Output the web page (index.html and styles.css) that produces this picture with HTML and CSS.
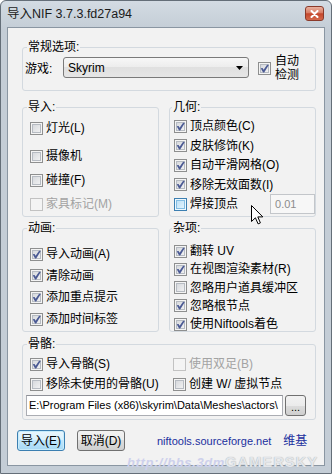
FILE: index.html
```html
<!DOCTYPE html>
<html lang="zh-CN">
<head>
<meta charset="utf-8">
<title>导入NIF</title>
<link rel="stylesheet" href="styles.css">
</head>
<body>
<svg class="defs" width="0" height="0" aria-hidden="true">
  <symbol id="chk" viewBox="0 0 11 11">
    <path d="M1.7 5.3 L3.6 4.9 L4.6 6.8 L8.1 1.7 L9.8 2.1 L5.2 9.4 L4.1 9.4 Z" fill="#4b5a94"/>
  </symbol>
</svg>
<div class="window">
  <header class="titlebar">
    <span class="title">导入NIF 3.7.3.fd27a94</span>
    <span class="close"><svg width="9" height="8" viewBox="0 0 9 8"><path d="M1.5 1 L7.5 7 M7.5 1 L1.5 7" stroke="#fff" stroke-width="2" stroke-linecap="round"/></svg></span>
  </header>
  <main class="client">
    <fieldset class="group general">
      <legend>常规选项:</legend>
      <div class="game-row">
        <span class="game-lbl">游戏:</span>
        <div class="combo"><span>Skyrim</span><svg width="7" height="4" viewBox="0 0 7 4"><path d="M0 0H7L3.5 4Z" fill="#000"/></svg></div>
        <label class="auto"><span class="cb on"><svg><use href="#chk"/></svg></span><span class="auto-text">自动<br>检测</span></label>
      </div>
    </fieldset>

    <div class="cols row1">
      <fieldset class="group">
        <legend>导入:</legend>
        <div class="list l-import">
          <label class="item first"><span class="cb"></span>灯光(L)</label>
          <label class="item"><span class="cb"></span>摄像机</label>
          <label class="item"><span class="cb"></span>碰撞(F)</label>
          <label class="item disabled"><span class="cb"></span>家具标记(M)</label>
        </div>
      </fieldset>
      <fieldset class="group right">
        <legend>几何:</legend>
        <div class="list l-geo">
          <label class="item"><span class="cb on"><svg><use href="#chk"/></svg></span>顶点颜色(C)</label>
          <label class="item"><span class="cb on"><svg><use href="#chk"/></svg></span>皮肤修饰(K)</label>
          <label class="item"><span class="cb on"><svg><use href="#chk"/></svg></span>自动平滑网格(O)</label>
          <label class="item"><span class="cb on"><svg><use href="#chk"/></svg></span>移除无效面数(I)</label>
          <label class="item"><span class="cb hover"></span>焊接顶点<span class="num">0.01</span></label>
        </div>
      </fieldset>
    </div>

    <div class="cols row2">
      <fieldset class="group">
        <legend>动画:</legend>
        <div class="list l-anim">
          <label class="item"><span class="cb on"><svg><use href="#chk"/></svg></span>导入动画(A)</label>
          <label class="item"><span class="cb on"><svg><use href="#chk"/></svg></span>清除动画</label>
          <label class="item"><span class="cb on"><svg><use href="#chk"/></svg></span>添加重点提示</label>
          <label class="item"><span class="cb on"><svg><use href="#chk"/></svg></span>添加时间标签</label>
        </div>
      </fieldset>
      <fieldset class="group right">
        <legend>杂项:</legend>
        <div class="list l-misc">
          <label class="item"><span class="cb on"><svg><use href="#chk"/></svg></span>翻转 UV</label>
          <label class="item"><span class="cb on"><svg><use href="#chk"/></svg></span>在视图渲染素材(R)</label>
          <label class="item"><span class="cb"></span>忽略用户道具缓冲区</label>
          <label class="item"><span class="cb on"><svg><use href="#chk"/></svg></span>忽略根节点</label>
          <label class="item"><span class="cb on"><svg><use href="#chk"/></svg></span>使用Niftools着色</label>
        </div>
      </fieldset>
    </div>

    <fieldset class="group bones">
      <legend>骨骼:</legend>
      <div class="bones-body">
        <div class="bone-grid">
          <label class="item"><span class="cb on"><svg><use href="#chk"/></svg></span>导入骨骼(S)</label>
          <label class="item disabled"><span class="cb"></span>使用双足(B)</label>
          <label class="item"><span class="cb"></span>移除未使用的骨骼(U)</label>
          <label class="item"><span class="cb"></span>创建 W/ 虚拟节点</label>
        </div>
        <div class="path-row">
          <div class="path">E:\Program Files (x86)\skyrim\Data\Meshes\actors\</div>
          <span class="browse">...</span>
        </div>
      </div>
    </fieldset>

    <div class="bottom">
      <span class="btn default">导入(E)</span>
      <span class="btn cancel">取消(D)</span>
      <a class="link site">niftools.sourceforge.net</a>
      <a class="link wiki">维基</a>
    </div>
  </main>

  <div class="watermark"><span class="wm-a">http://bbs.3dm</span><span class="wm-b">GAMERSKY</span></div>
  <svg class="cursor" width="13" height="20" viewBox="0 0 13 20"><path d="M0.5 0.5 L0.5 16.5 L4.4 12.8 L7.1 18.9 L9.4 17.9 L6.8 11.9 L11.8 11.9 Z" fill="#fff" stroke="#000" stroke-width="1" stroke-linejoin="miter"/></svg>
</div>
</body>
</html>
```
FILE: styles.css
```css
* { box-sizing: border-box; }
html, body { margin: 0; padding: 0; }
body {
  width: 332px;
  height: 474px;
  overflow: hidden;
  background: #fff;
  font-family: "Liberation Sans", "Noto Sans CJK SC", sans-serif;
  font-size: 12px;
  line-height: 14px;
  color: #000;
}
.defs { position: absolute; width: 0; height: 0; }

.window {
  position: relative;
  width: 332px;
  height: 474px;
  border: 1px solid #646e78;
  border-radius: 6px 6px 0 0;
  background: linear-gradient(#d3dbe3, #c4cdd6 28px, #c4cdd6);
  display: flex;
  flex-direction: column;
}
.titlebar {
  height: 26px;
  flex: none;
  display: flex;
  align-items: center;
  justify-content: space-between;
  padding: 0 7px 0 6px;
}
.title { color: #1b1b1b; font-size: 12.5px; }
.close {
  width: 19px;
  height: 15px;
  margin-top: -1px;
  border: 1px solid #8b3a2a;
  border-radius: 3px;
  background: linear-gradient(#e9b19f, #d87c64 45%, #c4462c 52%, #d3694b);
  display: flex;
  align-items: center;
  justify-content: center;
}

.client {
  flex: 1;
  margin: 0 6px 7px;
  border: 1px solid #8a96a2;
  background: #f2f2f2;
  display: flex;
  flex-direction: column;
  padding: 12px 8px 0 14px;
}

.group {
  margin: 0;
  padding: 0;
  min-width: 0;
  border: 1px solid #d3d9df;
  border-radius: 3px;
}
.group legend {
  padding: 0 1px;
  margin-left: 4px;
  line-height: 14px;
}
.group.right legend { margin-left: 2px; }

.general { height: 51px; flex: none; }
.game-row {
  display: flex;
  align-items: center;
  padding: 1px 0 0 2px;
}
.game-lbl { width: 28px; }
.combo {
  margin-left: 10px;
  width: 186px;
  height: 21px;
  align-self: flex-start;
  margin-top: 2px;
  border: 1px solid #7a7a7a;
  border-radius: 3px;
  background: linear-gradient(#f7f7f7, #ececec 50%, #e0e0e0 50%, #e6e6e6);
  display: flex;
  align-items: center;
  justify-content: space-between;
  padding: 0 5px 0 4px;
}
.auto { margin-left: 9px; display: flex; align-items: center; gap: 4px; }
.auto-text { line-height: 13.5px; }

.cols {
  display: grid;
  grid-template-columns: 137px 147px;
  column-gap: 10px;
  flex: none;
}
.row1 { margin-top: 9px; height: 117px; }
.row2 { margin-top: 4px; height: 110px; }

.list { display: flex; flex-direction: column; }
.l-import { padding: 7px 0 0 7px; gap: 10px; }
.l-import .first { margin-bottom: 4px; }
.l-geo { padding: 5px 0 0 4px; gap: 5.5px; }
.l-anim { padding: 12px 0 0 7px; gap: 7.7px; }
.l-misc { padding: 9px 0 0 4px; gap: 4.25px; }

.item {
  display: flex;
  align-items: center;
  gap: 3px;
  height: 14px;
  white-space: nowrap;
}
.item.disabled { color: #a3a3a3; }

.cb {
  flex: none;
  width: 13px;
  height: 13px;
  border: 1px solid #8e8f8f;
  background: linear-gradient(135deg, #d0d3d8, #f7f7f7);
  box-shadow: inset 0 0 0 1px #f4f4f4, inset 0 0 0 2px #b6bbc2;
}
.cb svg { display: block; width: 11px; height: 11px; }
.cb.hover {
  border-color: #3c7fb1;
  background: linear-gradient(135deg, #b4dcf5, #eaf7fe);
  box-shadow: inset 0 0 0 1px #eef8fe, inset 0 0 0 2px #83bde3;
}
.disabled .cb {
  border-color: #c2c2c2;
  background: #f4f4f4;
  box-shadow: none;
}

.num {
  width: 46px;
  height: 20px;
  margin: -3px 0 -3px 29px;
  border: 1px solid #c3c6ca;
  background: #f7f7f7;
  color: #8c8c8c;
  font-size: 11px;
  line-height: 18px;
  padding-left: 4px;
}

.bones { margin-top: 6px; height: 83px; flex: none; }
.bones-body { padding: 6px 0 0 3px; }
.bone-grid {
  display: grid;
  grid-template-columns: 143px 1fr;
  row-gap: 6px;
  padding-left: 4px;
}
.path-row { display: flex; margin-top: 4px; height: 21px; }
.path {
  width: 257px;
  height: 21px;
  border: 1px solid #abadb3;
  border-top-color: #8e9097;
  background: #fff;
  font-size: 11px;
  line-height: 19px;
  padding-left: 2px;
  white-space: nowrap;
  overflow: hidden;
}
.browse {
  width: 21px;
  height: 21px;
  margin-left: 2px;
  border: 1px solid #707070;
  border-radius: 3px;
  background: linear-gradient(#f2f2f2, #ebebeb 50%, #dddddd 50%, #cfcfcf);
  font-size: 11px;
  line-height: 22px;
  text-align: center;
}

.bottom {
  display: flex;
  align-items: center;
  margin: 10px 0 0 -5px;
  height: 21px;
  flex: none;
}
.btn {
  width: 48px;
  height: 21px;
  border: 1px solid #707070;
  border-radius: 3px;
  background: linear-gradient(#f2f2f2, #ebebeb 50%, #dddddd 50%, #cfcfcf);
  display: flex;
  align-items: center;
  justify-content: center;
  white-space: nowrap;
}
.btn.default {
  border-color: #3c7fb1;
  background: linear-gradient(#eaf6fd, #d9f0fc 50%, #bee6fd 50%, #a7d9f5);
  box-shadow: inset 0 0 0 1px #c8ecfb;
}
.btn.cancel { margin-left: 12px; }
.link { color: #1b2f9e; text-decoration: none; }
.site { margin-left: 32px; font-size: 11px; }
.wiki { margin-left: 12px; }

.watermark {
  position: absolute;
  left: 126px;
  top: 453px;
  white-space: nowrap;
  font-family: "Liberation Sans", sans-serif;
  font-weight: bold;
  line-height: 16px;
}
.wm-a {
  font-size: 13px;
  letter-spacing: 0.6px;
  color: #cdd0ec;
  font-style: italic;
}
.wm-b {
  font-size: 15px;
  letter-spacing: 0.8px;
  color: #e3e6ea;
  text-shadow: 0 0 1px #9aa0a8;
}
.cursor {
  position: absolute;
  left: 250px;
  top: 204px;
}
```
